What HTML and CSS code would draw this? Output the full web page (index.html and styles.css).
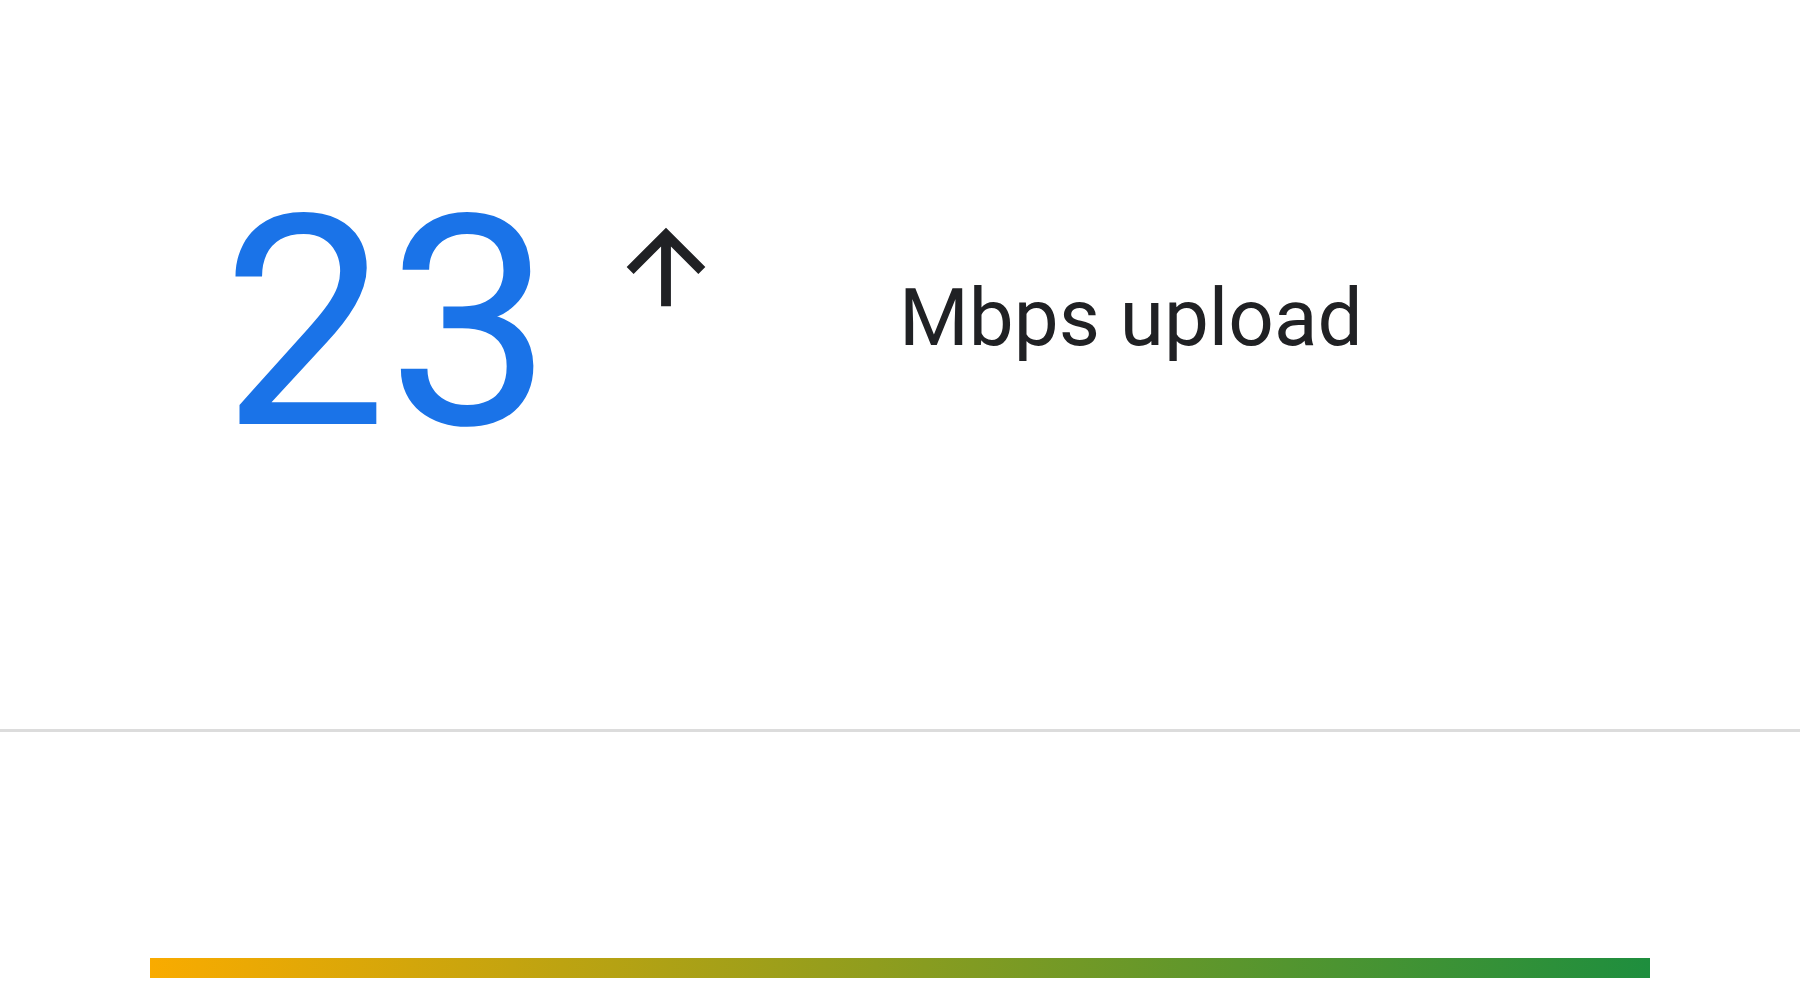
FILE: index.html
```html
<!DOCTYPE html>
<html lang="en">
<head>
<meta charset="utf-8">
<title>Upload speed</title>
<link rel="stylesheet" href="styles.css">
</head>
<body>
<main class="page">
  <section class="result">
    <div class="value">23</div>
    <svg class="arrow" viewBox="0 0 24 24" aria-hidden="true">
      <path d="M4 12l1.41 1.41L11 7.83V20h2V7.83l5.58 5.59L20 12l-8-8-8 8z"/>
    </svg>
    <div class="unit">Mbps upload</div>
  </section>
  <div class="divider"></div>
  <div class="meter">
    <div class="meter-bar"></div>
  </div>
</main>
</body>
</html>
```

FILE: styles.css
```css
html, body {
  margin: 0;
  padding: 0;
  background: #ffffff;
}

.page {
  width: 1800px;
  height: 1000px;
  overflow: hidden;
  font-family: Roboto, "Liberation Sans", sans-serif;
}

.result {
  height: 729px;
  display: flex;
  align-items: flex-start;
  padding-left: 222px;
  box-sizing: border-box;
}

.value {
  width: 385px;
  margin-top: 177px;
  font-size: 294px;
  line-height: 1;
  color: #1a73e8;
}

.arrow {
  width: 118px;
  height: 118px;
  margin-top: 208px;
  fill: #202124;
  flex: none;
}

.unit {
  margin-left: 174px;
  margin-top: 278px;
  font-size: 80px;
  line-height: 1;
  color: #202124;
  white-space: nowrap;
}

.divider {
  height: 3px;
  background: #dcdcdc;
}

.meter {
  padding: 226px 0 0 150px;
}

.meter-bar {
  width: 1500px;
  height: 20px;
  background: linear-gradient(to right, #f9ab00 0%, #1e8e3e 100%);
}
```
